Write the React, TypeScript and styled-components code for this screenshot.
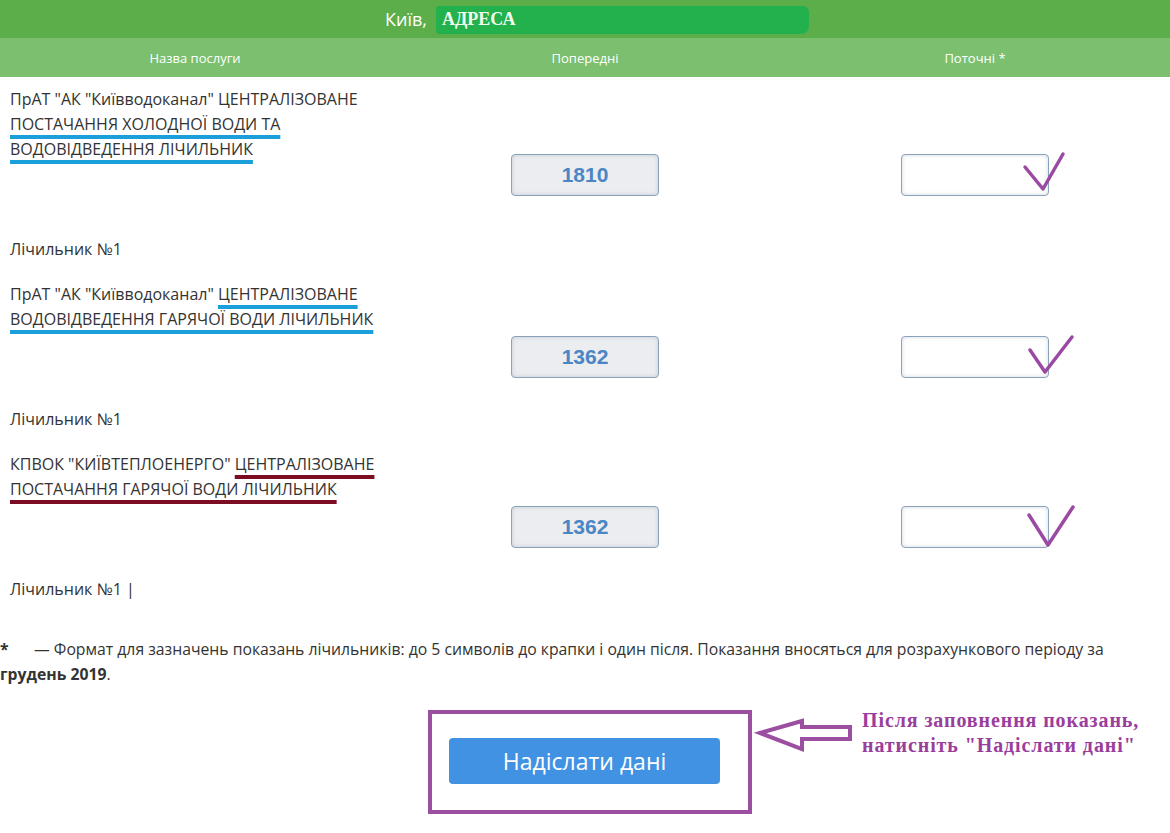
import React from 'react';
import styled, { createGlobalStyle } from 'styled-components';

const GlobalStyle = createGlobalStyle`
  html, body {
    margin: 0;
    padding: 0;
    background: #fff;
  }
  body {
    font-family: "Open Sans", "Liberation Sans", sans-serif;
    color: #333;
  }
`;

const Page = styled.div`
  width: 1170px;
  min-height: 833px;
  background: #fff;
`;

const TitleBar = styled.div`
  height: 38px;
  background: #5cae4b;
  display: flex;
  align-items: center;
  justify-content: center;
  padding-left: 24px;
  box-sizing: border-box;
`;

const City = styled.span`
  color: #fff;
  font-size: 18px;
  margin-right: 9px;
`;

const AddressMask = styled.span`
  display: inline-flex;
  align-items: center;
  width: 373px;
  height: 28px;
  margin-top: 1px;
  padding-left: 6px;
  box-sizing: border-box;
  background: #22b14c;
  border-radius: 3px 6px 8px 3px;
  color: #f2fbec;
  font-family: "Liberation Serif", "DejaVu Serif", serif;
  font-weight: bold;
  font-size: 18px;
`;

const Columns = styled.div`
  display: grid;
  grid-template-columns: 390px 390px 390px;
`;

const HeadRow = styled(Columns)`
  height: 39px;
  background: #7bbf6f;
  align-items: center;
`;

const HeadCell = styled.div`
  text-align: center;
  color: #fff;
  font-size: 13px;
`;

const Row = styled(Columns)`
  align-items: center;
  padding: 10px 0;
`;

const NameCell = styled.div`
  padding: 0 10px;
  font-size: 16px;
  line-height: 25px;
`;

const MeterName = styled.div`
  width: 372px;
`;

const Meter = styled.div`
  margin-top: 75px;
`;

const Mark = styled.span<{ $color: string }>`
  text-decoration: underline;
  text-decoration-color: ${p => p.$color};
  text-decoration-thickness: 4px;
  text-underline-offset: 5px;
  text-decoration-skip-ink: none;
`;

const InputCell = styled.div`
  display: flex;
  justify-content: center;
`;

const Field = styled.div<{ $prev?: boolean }>`
  position: relative;
  width: 148px;
  height: 42px;
  box-sizing: border-box;
  border: 1px solid #8aa3ba;
  border-radius: 4px;
  background: ${p => (p.$prev ? '#ebedf0' : '#fff')};
  box-shadow: inset 0 0 4px rgba(120, 140, 160, 0.35);
  display: flex;
  align-items: center;
  justify-content: center;
  color: #4a86c5;
  font-family: "Liberation Sans", Arial, sans-serif;
  font-weight: bold;
  font-size: 21px;
`;

const Check = styled.svg`
  position: absolute;
  left: 118px;
  top: -6px;
  overflow: visible;
`;

const Note = styled.div`
  margin-top: 25px;
  font-size: 15.75px;
  line-height: 25px;
`;

const Star = styled.b`
  display: inline-block;
  width: 34px;
`;

const Actions = styled.div`
  display: grid;
  grid-template-columns: 1fr auto 1fr;
  margin-top: 23px;
`;

const Frame = styled.div`
  grid-column: 2;
  margin-left: 10px;
  border: 4px solid #9c4fa0;
  padding: 24px 28px 26px 17px;
`;

const SendButton = styled.button`
  display: block;
  width: 271px;
  height: 46px;
  border: none;
  border-radius: 4px;
  background: #4192e3;
  color: #fff;
  font-family: "Open Sans", "Liberation Sans", sans-serif;
  font-size: 23px;
  cursor: pointer;
`;

const Hint = styled.div`
  display: flex;
  align-items: flex-start;
`;

const HintText = styled.div`
  margin-left: 6px;
  color: #9a3e9d;
  font-family: "Liberation Serif", "DejaVu Serif", serif;
  font-weight: bold;
  font-size: 20px;
  letter-spacing: 0.9px;
  line-height: 25px;
  margin-top: -2px;
`;

type Part = { t: string; mark?: string };

const BLUE = '#1a9fdb';
const RED = '#7b0c22';

const rows: { name: Part[]; prev: string; check: [number, number][] }[] = [
  {
    name: [
      { t: 'ПрАТ "АК "Київводоканал" ЦЕНТРАЛІЗОВАНЕ ' },
      { t: 'ПОСТАЧАННЯ ХОЛОДНОЇ ВОДИ ТА ВОДОВІДВЕДЕННЯ ЛІЧИЛЬНИК', mark: BLUE },
    ],
    prev: '1810',
    check: [[5, 18], [23, 40], [43, 5]],
  },
  {
    name: [
      { t: 'ПрАТ "АК "Київводоканал" ' },
      { t: 'ЦЕНТРАЛІЗОВАНЕ ВОДОВІДВЕДЕННЯ ГАРЯЧОЇ ВОДИ ЛІЧИЛЬНИК', mark: BLUE },
    ],
    prev: '1362',
    check: [[10, 19], [25, 41], [52, 6]],
  },
  {
    name: [
      { t: 'КПВОК "КИЇВТЕПЛОЕНЕРГО" ' },
      { t: 'ЦЕНТРАЛІЗОВАНЕ ПОСТАЧАННЯ ГАРЯЧОЇ ВОДИ ЛІЧИЛЬНИК', mark: RED },
    ],
    prev: '1362',
    check: [[9, 14], [28, 44], [53, 6]],
  },
];

export default function App() {
  return (
    <Page>
      <GlobalStyle />
      <TitleBar>
        <City>Київ,</City>
        <AddressMask>АДРЕСА</AddressMask>
      </TitleBar>
      <HeadRow>
        <HeadCell>Назва послуги</HeadCell>
        <HeadCell>Попередні</HeadCell>
        <HeadCell>Поточні *</HeadCell>
      </HeadRow>

      {rows.map((r, i) => (
        <Row key={i}>
          <NameCell>
            <MeterName>
              {r.name.map((p, j) =>
                p.mark ? <Mark key={j} $color={p.mark}>{p.t}</Mark> : <span key={j}>{p.t}</span>
              )}
            </MeterName>
            <Meter>Лічильник №1{i === 2 ? ' |' : ''}</Meter>
          </NameCell>
          <InputCell>
            <Field $prev>{r.prev}</Field>
          </InputCell>
          <InputCell>
            <Field>
              <Check width="60" height="50">
                <polyline
                  points={r.check.map(c => c.join(',')).join(' ')}
                  fill="none"
                  stroke="#9b4aa3"
                  strokeWidth="3.5"
                  strokeLinecap="round"
                  strokeLinejoin="round"
                />
              </Check>
            </Field>
          </InputCell>
        </Row>
      ))}

      <Note>
        <Star>*</Star>— Формат для зазначень показань лічильників: до 5 символів до крапки і один після.
        Показання вносяться для розрахункового періоду за <b>грудень 2019</b>.
      </Note>

      <Actions>
        <Frame>
          <SendButton>Надіслати дані</SendButton>
        </Frame>
        <Hint>
          <svg width="104" height="46" viewBox="0 0 104 46">
            <polygon
              points="8,23 50,11 50,17 98,17 98,29 50,29 50,39"
              fill="none"
              stroke="#9c4fa0"
              strokeWidth="4"
            />
          </svg>
          <HintText>
            Після заповнення показань,
            <br />
            натисніть "Надіслати дані"
          </HintText>
        </Hint>
      </Actions>
    </Page>
  );
}
